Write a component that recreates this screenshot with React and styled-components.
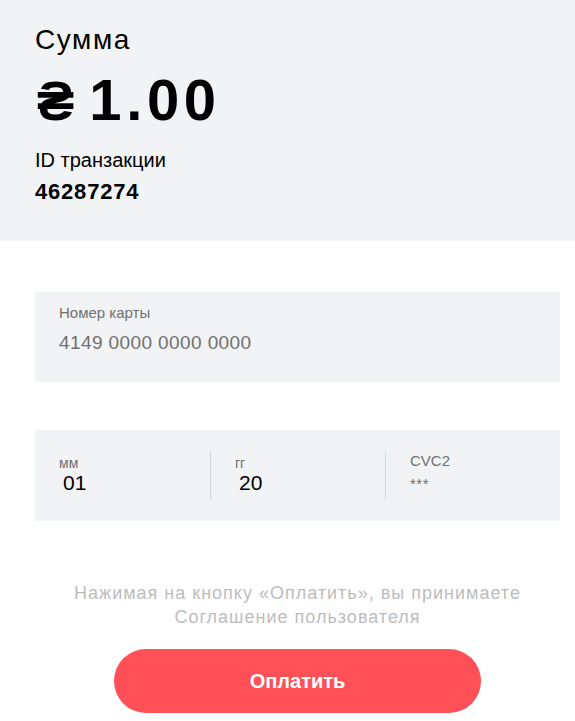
import styled, { createGlobalStyle } from "styled-components";

const GlobalStyle = createGlobalStyle`
    body {
        margin: 0;
        background: #fff;
        font-family: "Liberation Sans", Arial, sans-serif;
    }
`;

const Page = styled.div`
    width: 575px;
`;

const Summary = styled.div`
    background-color: #f2f3f5;
    padding: 23px 35px 0;
    height: 241px;
    box-sizing: border-box;
`;

const Title = styled.div`
    font-size: 28px;
    line-height: 34px;
    letter-spacing: 1.6px;
    color: #000;
`;

const Amount = styled.div`
    font-size: 58px;
    font-weight: 700;
    line-height: 66px;
    margin-top: 10px;
    color: #000;
    display: flex;
    align-items: baseline;
    gap: 15px;
`;

const Currency = styled.span`
    font-size: 56px;
    font-weight: 700;
    margin-left: 2px;
`;

const Sum = styled.span`
    letter-spacing: 4.6px;
`;

const IdLabel = styled.div`
    font-size: 20px;
    line-height: 24px;
    margin-top: 14px;
    color: #000;
`;

const IdValue = styled.div`
    font-size: 22px;
    font-weight: 700;
    line-height: 26px;
    letter-spacing: 0.8px;
    margin-top: 7px;
    color: #000;
`;

const Form = styled.div`
    padding: 51px 15px 0 35px;
    display: flex;
    flex-direction: column;
`;

const Field = styled.div`
    background-color: #f2f3f5;
    height: 90px;
    box-sizing: border-box;
    padding: 13px 24px;
    margin-bottom: ${({ $gap }) => $gap || 0}px;
`;

const Label = styled.div`
    font-size: 15px;
    line-height: 16px;
    color: #707070;
`;

const CardNumber = styled.div`
    font-size: 19px;
    line-height: 22px;
    letter-spacing: 0.4px;
    margin-top: 11px;
    color: #707070;
`;

const Row = styled.div`
    background-color: #f2f3f5;
    height: 91px;
    display: grid;
    grid-template-columns: 175px 175px 1fr;
    align-items: center;
`;

const Cell = styled.div`
    padding: ${({ $top }) => ($top ? "2px" : "4px")} 0 0 24px;
    border-left: ${({ $first }) => ($first ? "none" : "1px solid #d6d6d6")};
    height: 49px;
    box-sizing: border-box;
    display: flex;
    flex-direction: column;
`;

const SmallLabel = styled.div`
    font-size: ${({ $size }) => $size || 14}px;
    line-height: 16px;
    color: #707070;
`;

const Value = styled.div`
    font-size: 21px;
    line-height: 24px;
    color: #000;
    padding-left: 4px;
`;

const Secret = styled.div`
    font-size: 15px;
    line-height: 18px;
    letter-spacing: 0.5px;
    color: #707070;
    margin-top: 6px;
`;

const Terms = styled.p`
    margin: 60px 0 0;
    text-align: center;
    font-size: 18px;
    line-height: 24px;
    letter-spacing: 1px;
    color: #bdbdbd;
`;

const PayButton = styled.button`
    display: block;
    margin: 20px auto 0;
    width: 367px;
    height: 64px;
    border: none;
    border-radius: 32px;
    background-color: #ff5057;
    color: #fff;
    font-family: "Liberation Sans", Arial, sans-serif;
    font-size: 20px;
    font-weight: 700;
    cursor: pointer;
`;

function App() {
    return (
        <Page>
            <GlobalStyle />
            <Summary>
                <Title>Сумма</Title>
                <Amount>
                    <Currency>₴</Currency>
                    <Sum>1.00</Sum>
                </Amount>
                <IdLabel>ID транзакции</IdLabel>
                <IdValue>46287274</IdValue>
            </Summary>
            <Form>
                <Field $gap={48}>
                    <Label>Номер карты</Label>
                    <CardNumber>4149 0000 0000 0000</CardNumber>
                </Field>
                <Row>
                    <Cell $first>
                        <SmallLabel>мм</SmallLabel>
                        <Value>01</Value>
                    </Cell>
                    <Cell>
                        <SmallLabel>гг</SmallLabel>
                        <Value>20</Value>
                    </Cell>
                    <Cell $top>
                        <SmallLabel $size={15}>CVC2</SmallLabel>
                        <Secret>***</Secret>
                    </Cell>
                </Row>
                <Terms>
                    Нажимая на кнопку «Оплатить», вы принимаете
                    <br />
                    Соглашение пользователя
                </Terms>
                <PayButton>Оплатить</PayButton>
            </Form>
        </Page>
    );
}

export default App;
